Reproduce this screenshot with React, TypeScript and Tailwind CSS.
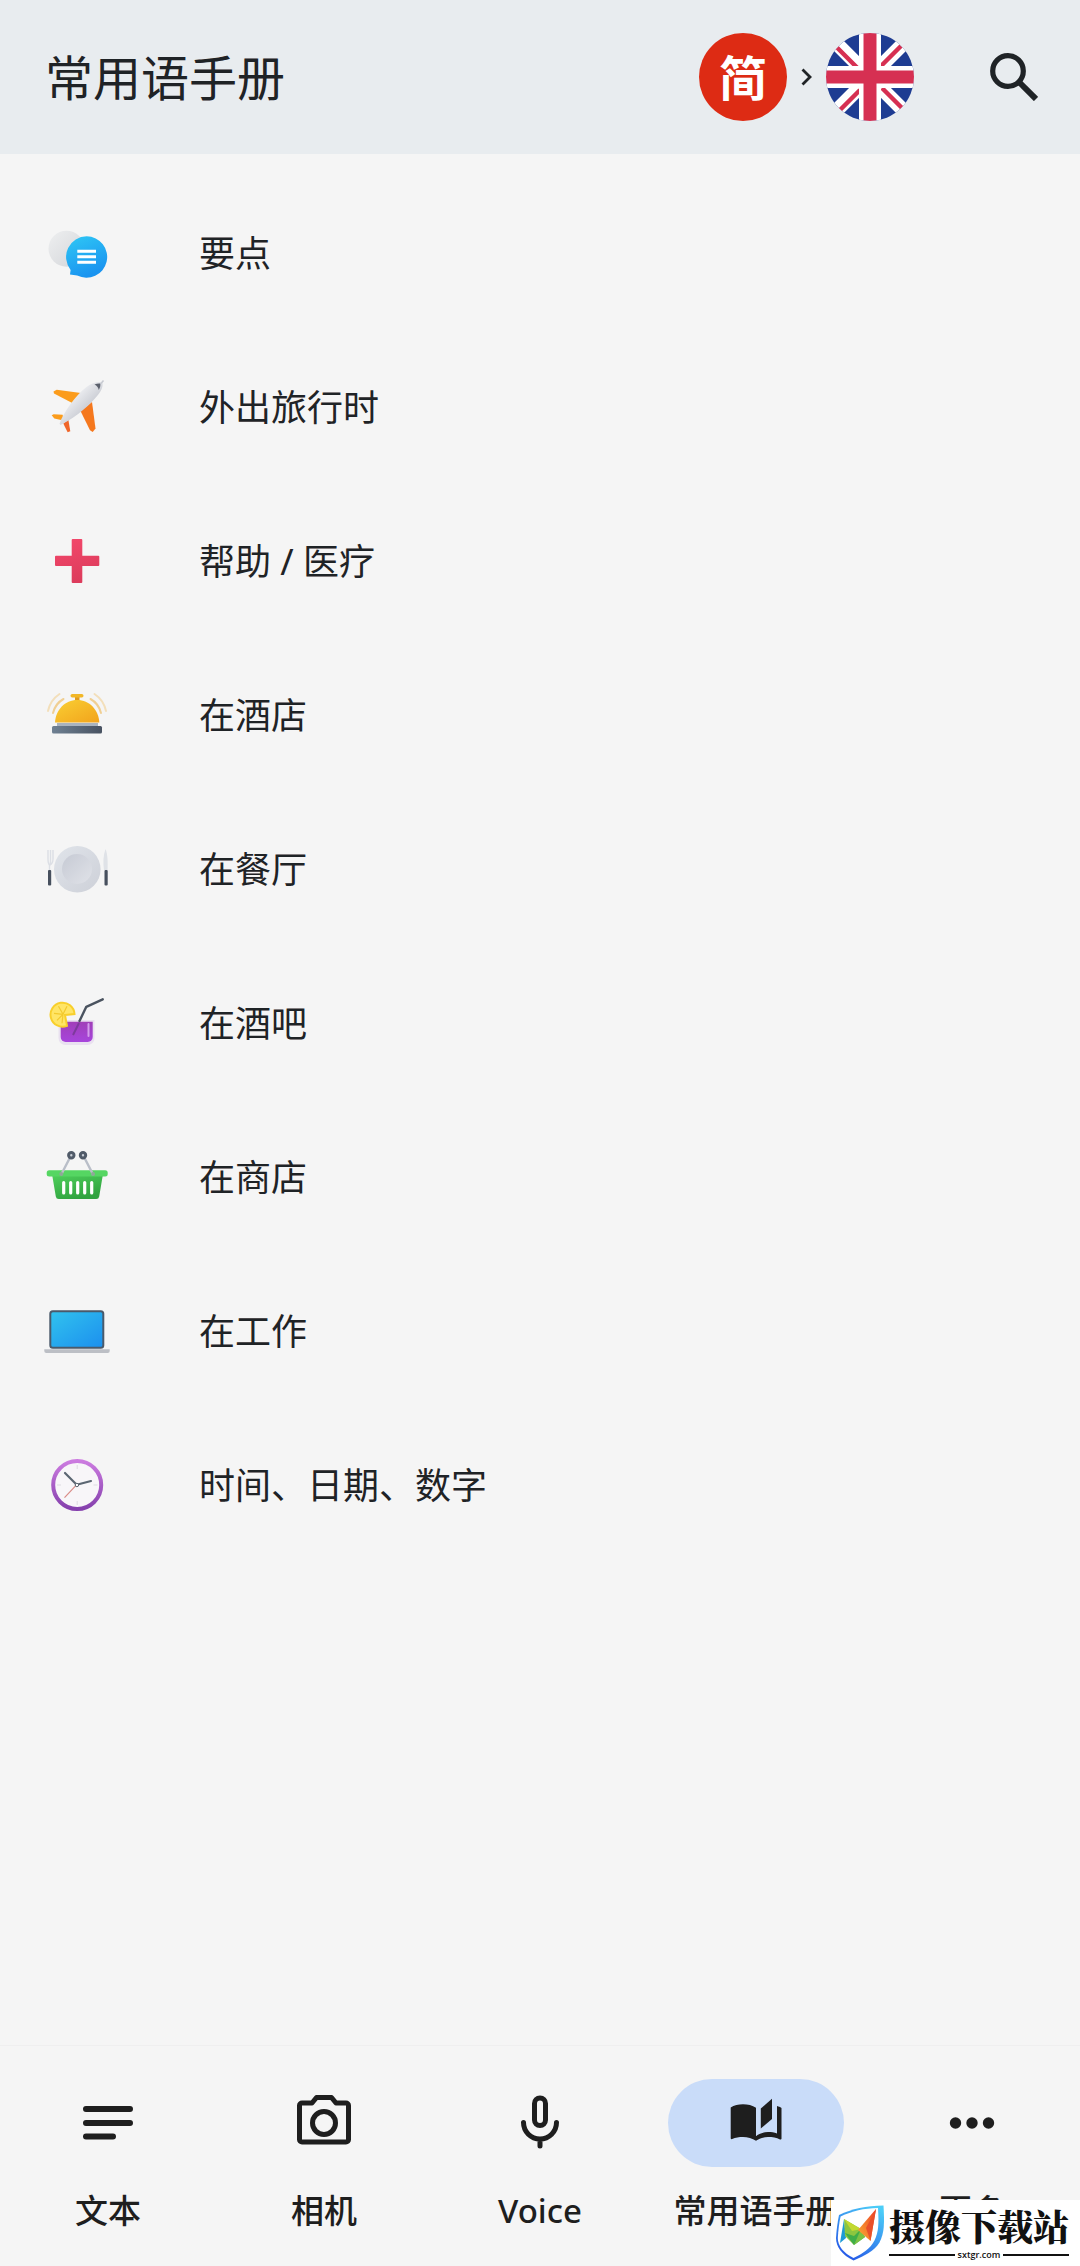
import type { ReactNode } from 'react';

interface Category {
    id: string;
    label: string;
    icon: ReactNode;
}

interface Tab {
    id: string;
    label: string;
    icon: ReactNode;
}

const EssentialsIcon = () => (
    <svg viewBox="0 0 72 72" className="size-[72px] shrink-0" aria-hidden="true">
        <defs>
            <linearGradient id="bubble" x1="0" y1="0" x2="0.4" y2="1">
                <stop offset="0" stopColor="#2fc8f5" />
                <stop offset="1" stopColor="#1a94f0" />
            </linearGradient>
            <linearGradient id="bubbleBack" x1="0" y1="0" x2="1" y2="1">
                <stop offset="0" stopColor="#eeeff0" />
                <stop offset="1" stopColor="#d3d5d9" />
            </linearGradient>
        </defs>
        <circle cx="25.5" cy="29.7" r="18" fill="url(#bubbleBack)" />
        <path d="M45.7 17.3a20.7 20.7 0 1 1-9.5 39.2L29 55.5l.6-4.6A20.7 20.7 0 0 1 45.7 17.3z" fill="url(#bubble)" />
        <path d="M36.3 32.3H55M36.3 37.8H55M36.3 43.3H55" stroke="#fff" strokeWidth="3" />
    </svg>
);

const PlaneIcon = () => (
    <svg viewBox="0 0 72 72" className="size-[72px] shrink-0" aria-hidden="true">
        <defs>
            <linearGradient id="fuselage" x1="0.3" y1="0.3" x2="0.7" y2="0.7">
                <stop offset="0" stopColor="#eff0f3" />
                <stop offset="1" stopColor="#c3c6ce" />
            </linearGradient>
        </defs>
        <path d="M12.5 18.5l3.2-1.8 26 3.6-9.5 10.2L13 20.6z" fill="#fb9c1c" />
        <path d="M51 29l3.5 26.5-2.8 3.4-2.7-1.6L39.5 38z" fill="#f5781e" />
        <path d="M10.7 42.3l2-1.1 9 .6.6 5.8-9-2.2z" fill="#fb9c1c" />
        <path d="M22.3 50.6l5-4 2 11.7-2.7 1z" fill="#f0662a" />
        <path d="M61.3 9.8c1 3.5-.8 7.7-4 11.7C51 29.5 37 43.5 19.5 52l-1-1.2C22 40 34.5 22.5 45.5 14 50.5 10.2 56.5 8.4 61.3 9.8z" fill="url(#fuselage)" />
        <path d="M53.5 11.5c2-.9 4-1.2 5.8-1 .3 2-.2 4.3-1.5 6.5-.5-2.5-1.9-4.4-4.3-5.5z" fill="#5b606c" />
        <path d="M60 10.5l2.5-3" stroke="#c7cad1" strokeWidth="1.5" />
    </svg>
);

const CrossIcon = () => (
    <svg viewBox="0 0 72 72" className="size-[72px] shrink-0" aria-hidden="true">
        <defs>
            <linearGradient id="cross" x1="0" y1="0" x2="0.3" y2="1">
                <stop offset="0" stopColor="#f4486c" />
                <stop offset="1" stopColor="#dd3c5c" />
            </linearGradient>
        </defs>
        <path d="M31.7 12h8.6a1 1 0 0 1 1 1v15.7h16a1 1 0 0 1 1 1V38a1 1 0 0 1-1 1h-16v16a1 1 0 0 1-1 1h-8.6a1 1 0 0 1-1-1V39H15a1 1 0 0 1-1-1v-8.3a1 1 0 0 1 1-1h15.7V13a1 1 0 0 1 1-1z" fill="url(#cross)" />
    </svg>
);

const BellIcon = () => (
    <svg viewBox="0 0 72 72" className="size-[72px] shrink-0" aria-hidden="true">
        <defs>
            <linearGradient id="dome" x1="0" y1="0" x2="1" y2="1">
                <stop offset="0" stopColor="#f9cf33" />
                <stop offset="1" stopColor="#f2a31c" />
            </linearGradient>
            <linearGradient id="bellBase" x1="0" y1="0" x2="1" y2="0">
                <stop offset="0" stopColor="#6f8193" />
                <stop offset="1" stopColor="#485261" />
            </linearGradient>
        </defs>
        <path d="M34 16h4.5v5H34z" fill="#e09a1c" />
        <rect x="29.5" y="13" width="13" height="3.5" rx="1.7" fill="#f2b727" />
        <path d="M14 41.5C14.5 29 24 19 36.2 19s21.6 10 22.1 22.5z" fill="url(#dome)" />
        <rect x="16" y="42" width="41" height="3.5" fill="#a9b3bf" />
        <rect x="11" y="45" width="50" height="7.5" rx="1.5" fill="url(#bellBase)" />
        <g fill="none" strokeLinecap="round">
            <path d="M12 32c1.5-6 5-11 10.5-14M60 32c-1.5-6-5-11-10.5-14" stroke="#f0cf93" strokeWidth="2" />
            <path d="M7 30c1.5-7 5.5-13 11.5-17M65 30c-1.5-7-5.5-13-11.5-17" stroke="#f3dfba" strokeWidth="2" />
        </g>
    </svg>
);

const PlateIcon = () => (
    <svg viewBox="0 0 72 72" className="size-[72px] shrink-0" aria-hidden="true">
        <defs>
            <linearGradient id="plate" x1="0" y1="0" x2="1" y2="1">
                <stop offset="0" stopColor="#e0e4ea" />
                <stop offset="1" stopColor="#cdd0d8" />
            </linearGradient>
            <linearGradient id="plateInner" x1="0" y1="0" x2="1" y2="1">
                <stop offset="0" stopColor="#c6cad4" />
                <stop offset="1" stopColor="#e0e2e8" />
            </linearGradient>
        </defs>
        <circle cx="36.3" cy="34.3" r="23.3" fill="url(#plate)" />
        <circle cx="36" cy="34" r="15" fill="url(#plateInner)" />
        <path d="M7 15v9c0 3 .5 5 1.5 6v5M12 15v9c0 3-1 5-3 6M9.5 15v14" stroke="#dcdfe5" strokeWidth="1.4" fill="none" />
        <path d="M63 35c-1-7-1-14 1.5-21 2 4 2.5 14 2 21z" fill="#dfe2e7" />
        <rect x="7" y="35" width="3.2" height="15.5" rx="1" fill="#47505e" />
        <rect x="63.5" y="35" width="3.2" height="15.5" rx="1" fill="#47505e" />
    </svg>
);

const DrinkIcon = () => (
    <svg viewBox="0 0 72 72" className="size-[72px] shrink-0" aria-hidden="true">
        <defs>
            <linearGradient id="drink" x1="0" y1="0" x2="0" y2="1">
                <stop offset="0" stopColor="#a03fb8" />
                <stop offset="1" stopColor="#a745dc" />
            </linearGradient>
        </defs>
        <path d="M17.5 31h36v18a7 7 0 0 1-7 7h-22a7 7 0 0 1-7-7z" fill="#e9e1f0" />
        <path d="M19.7 32.7h32V48a5 5 0 0 1-5 5h-22a5 5 0 0 1-5-5z" fill="url(#drink)" />
        <path d="M38 34l-6 12" stroke="#7d3a9c" strokeWidth="2" />
        <path d="M47.5 35v12" stroke="#d39cec" strokeWidth="2" strokeLinecap="round" />
        <path d="M61.7 10.3L45.3 17.8 38.5 32" stroke="#4a535f" strokeWidth="2.4" fill="none" strokeLinecap="round" strokeLinejoin="round" />
        <path d="M24 26L33.5 25A12 12 0 1 0 26 36.8z" fill="#ffe566" stroke="#f8cf2b" strokeWidth="2" />
        <path d="M22 25.3l-4.5-8M22 25.3l4-8M22 25.3l-9-1M22 25.3l-6 6M22 25.3l-1 9" stroke="#f3c92d" strokeWidth="1.2" />
    </svg>
);

const BasketIcon = () => (
    <svg viewBox="0 0 72 72" className="size-[72px] shrink-0" aria-hidden="true">
        <defs>
            <linearGradient id="basket" x1="0" y1="0" x2="0.5" y2="1">
                <stop offset="0" stopColor="#4fd05c" />
                <stop offset="1" stopColor="#30a33f" />
            </linearGradient>
        </defs>
        <path d="M11 31h51l-3.8 22.5a3 3 0 0 1-3 2.5H17.8a3 3 0 0 1-3-2.5z" fill="url(#basket)" />
        <rect x="5.7" y="27.3" width="61" height="6.2" rx="2.5" fill="#55d662" />
        <path d="M22.7 39.5V50M29.7 39.5V50M36.7 39.5V50M43.7 39.5V50M50.7 39.5V50" stroke="#fff" strokeWidth="3.2" strokeLinecap="round" />
        <path d="M20.5 31L29 14.5M51.8 31L43.3 14.5" stroke="#b9bec8" strokeWidth="2.4" strokeLinecap="round" />
        <circle cx="20.3" cy="31" r="2" fill="#8fa898" />
        <circle cx="52" cy="31" r="2" fill="#8fa898" />
        <circle cx="30.3" cy="12.2" r="2.7" fill="#c8cdd6" stroke="#515b69" strokeWidth="3" />
        <circle cx="42" cy="12.2" r="2.7" fill="#c8cdd6" stroke="#515b69" strokeWidth="3" />
    </svg>
);

const LaptopIcon = () => (
    <svg viewBox="0 0 72 72" className="size-[72px] shrink-0" aria-hidden="true">
        <defs>
            <linearGradient id="screen" x1="0" y1="0" x2="1" y2="1">
                <stop offset="0" stopColor="#31c3ee" />
                <stop offset="1" stopColor="#1c8fee" />
            </linearGradient>
        </defs>
        <rect x="9.3" y="14.3" width="53" height="36.4" rx="2.5" fill="url(#screen)" stroke="#4a5a6b" strokeWidth="2" />
        <path d="M3.3 52.3h65.4V54a2 2 0 0 1-2 2H5.3a2 2 0 0 1-2-2z" fill="#bcbfc5" />
    </svg>
);

const ClockIcon = () => (
    <svg viewBox="0 0 72 72" className="size-[72px] shrink-0" aria-hidden="true">
        <defs>
            <linearGradient id="clockRing" x1="0" y1="0" x2="0" y2="1">
                <stop offset="0" stopColor="#cc7be0" />
                <stop offset="1" stopColor="#8540ad" />
            </linearGradient>
        </defs>
        <circle cx="36.2" cy="34" r="24" fill="#f8f6f9" stroke="url(#clockRing)" strokeWidth="4" />
        <path d="M36.2 14v4M36.2 50v4M16 34h4M52.5 34h4" stroke="#dedbe2" strokeWidth="1" />
        <path d="M35.7 33.7L23.5 46.7" stroke="#d98a85" strokeWidth="1.2" />
        <path d="M35.7 33.7L24 22M35.7 33.7L50 30" stroke="#5b6672" strokeWidth="2.2" strokeLinecap="round" />
        <circle cx="35.9" cy="34" r="1.7" fill="#fff" stroke="#5b6672" strokeWidth="1" />
    </svg>
);

const UkFlag = () => (
    <svg viewBox="0 0 88 88" className="size-[88px]" aria-hidden="true">
        <defs>
            <clipPath id="flagClip">
                <circle cx="44" cy="44" r="44" />
            </clipPath>
        </defs>
        <g clipPath="url(#flagClip)">
            <rect width="88" height="88" fill="#1e3c92" />
            <path d="M2 2l84 84M86 2L2 86" stroke="#fff" strokeWidth="14" />
            <path d="M11 14.5L32 35.5M54 34L75 13M14 77L34 57M56 55L77 76" stroke="#d63052" strokeWidth="4.5" />
            <path d="M44 0v88M0 44h88" stroke="#fff" strokeWidth="22" />
            <path d="M44 0v88M0 44h88" stroke="#d63052" strokeWidth="13" />
        </g>
    </svg>
);

const TextIcon = () => (
    <svg viewBox="0 0 60 60" className="size-[60px]" fill="none" stroke="currentColor" strokeWidth="6" strokeLinecap="round" aria-hidden="true">
        <path d="M8 16h44M8 30h44M8 43.5h27" />
    </svg>
);

const CameraIcon = () => (
    <svg viewBox="0 0 60 60" className="size-[60px]" fill="none" stroke="currentColor" strokeWidth="5" strokeLinejoin="round" aria-hidden="true">
        <path d="M8 10h10l4.5-5.5h15L42 10h10a2.500 2.500 0 0 1 2.500 2.500v34A2.500 2.500 0 0 1 52 49H8a2.500 2.500 0 0 1-2.500-2.500v-34A2.500 2.500 0 0 1 8 10z" />
        <circle cx="30" cy="30" r="11.5" />
    </svg>
);

const MicIcon = () => (
    <svg viewBox="0 0 60 60" className="size-[60px]" fill="none" stroke="currentColor" strokeWidth="5" strokeLinecap="round" aria-hidden="true">
        <rect x="24.5" y="5" width="11" height="27.5" rx="5.5" />
        <path d="M13.5 29.5a16.5 16.5 0 0 0 33 0M30 46v7" />
    </svg>
);

const BookIcon = () => (
    <svg viewBox="0 0 60 60" className="size-[60px]" fill="currentColor" aria-hidden="true">
        <path d="M4.7 14.5C8 12.3 12.5 11.3 17 11.3c4.6 0 9.5 1 13 3.5v28.5c2.5-2.3 7.5-4.2 12-4.2 3.4 0 6.3.3 9 1.5V13c1.8.6 3 1 4.5 2v30.500c0 .8-.7 1.3-1.5 1-3.5-1.9-7.5-2.5-12-2.5-4.2 0-8.7 1.5-12 3.8-3.5-2.3-8.5-3.8-13-3.8-4 0-7.5.4-10.800 2-.8.4-1.5 0-1.5-.8z" />
        <path d="M46 5.7L34.8 15.5v20L46 26z" />
    </svg>
);

const MoreIcon = () => (
    <svg viewBox="0 0 60 60" className="size-[60px]" fill="currentColor" aria-hidden="true">
        <circle cx="13.5" cy="30" r="5.7" />
        <circle cx="30" cy="30" r="5.7" />
        <circle cx="46.5" cy="30" r="5.7" />
    </svg>
);

const ShieldLogo = () => (
    <svg viewBox="0 0 50 58" className="h-[58px] w-[50px] shrink-0" aria-hidden="true">
        <defs>
            <linearGradient id="shield" x1="0.8" y1="0" x2="0.2" y2="1">
                <stop offset="0" stopColor="#4ccdf8" />
                <stop offset="1" stopColor="#2353e6" />
            </linearGradient>
            <linearGradient id="shieldOrange" x1="1" y1="0" x2="0" y2="1">
                <stop offset="0" stopColor="#ee3d25" />
                <stop offset="1" stopColor="#f9b233" />
            </linearGradient>
        </defs>
        <path d="M48.5 1.5c1 17 1 27-4 37C39.5 47 29 52 18.5 56.5 7 51 1 43 1 34c.5-8 1.5-16 3-23C17 5 31 1.5 48.5 1.5z" fill="url(#shield)" />
        <path d="M43 4c1 16 .5 24-3.5 32.5C35.5 44.5 28 49.5 18.5 54 8.5 49 2.800 42 2.800 34c.5-8 1.300-15 2.800-21.500C17 7 29 4.200 43 4z" fill="#fff" />
        <path d="M9 15L5 39l6-5z" fill="#1d9ad6" />
        <path d="M9 15l17 10-7 16L10 32z" fill="#8cc63f" />
        <path d="M9 15l17 10-9 2z" fill="#c3d930" />
        <path d="M10 29l9 12 11-8-4-8-7 7z" fill="#3fae49" />
        <path d="M19 41l7-16 4 8z" fill="#7cc242" />
        <path d="M41 5L23 26l12.500 11z" fill="url(#shieldOrange)" />
        <path d="M41 5L31 24l4.500 13z" fill="#e9502a" />
    </svg>
);

const categories: Category[] = [
    { id: 'essentials', label: '要点', icon: <EssentialsIcon /> },
    { id: 'travel', label: '外出旅行时', icon: <PlaneIcon /> },
    { id: 'medical', label: '帮助 / 医疗', icon: <CrossIcon /> },
    { id: 'hotel', label: '在酒店', icon: <BellIcon /> },
    { id: 'restaurant', label: '在餐厅', icon: <PlateIcon /> },
    { id: 'bar', label: '在酒吧', icon: <DrinkIcon /> },
    { id: 'store', label: '在商店', icon: <BasketIcon /> },
    { id: 'work', label: '在工作', icon: <LaptopIcon /> },
    { id: 'time', label: '时间、日期、数字', icon: <ClockIcon /> },
];

const tabs: Tab[] = [
    { id: 'text', label: '文本', icon: <TextIcon /> },
    { id: 'camera', label: '相机', icon: <CameraIcon /> },
    { id: 'voice', label: 'Voice', icon: <MicIcon /> },
    { id: 'phrasebook', label: '常用语手册', icon: <BookIcon /> },
    { id: 'more', label: '更多', icon: <MoreIcon /> },
];

export default function App() {
    const activeTab = 'phrasebook';

    return (
        <div className="relative flex min-h-screen flex-col bg-[#f5f5f5] font-['Noto_Sans','Noto_Sans_CJK_SC',sans-serif] text-[#1f2326]">
            <header className="flex items-center bg-[#e8ecef] py-[33px] pr-[42px] pl-[45px] font-['Noto_Sans_CJK_SC',sans-serif]">
                <h1 className="flex-1 pb-1 text-[48px] leading-[56px] font-normal">常用语手册</h1>
                <div className="flex items-center gap-[14px]">
                    <button type="button" aria-label="简体中文" className="flex size-[88px] items-center justify-center rounded-full bg-[#dd2b14] pb-1 text-[48px] leading-none font-bold text-white">
                        简
                    </button>
                    <svg viewBox="0 0 11 18" className="h-[18px] w-[11px]" fill="none" stroke="currentColor" strokeWidth="2.8" aria-hidden="true">
                        <path d="M1.5 1.5L9 9l-7.5 7.5" />
                    </svg>
                    <button type="button" aria-label="English" className="rounded-full">
                        <UkFlag />
                    </button>
                </div>
                <button type="button" aria-label="搜索" className="ml-[76px]">
                    <svg viewBox="0 0 48 48" className="size-[48px]" fill="none" stroke="currentColor" aria-hidden="true">
                        <circle cx="18" cy="18" r="15.3" strokeWidth="5.2" />
                        <path d="M29.5 29.5L46 46" strokeWidth="6" />
                    </svg>
                </button>
            </header>

            {/* Phrase categories */}
            <main className="flex-1 py-6">
                <ul>
                    {categories.map(c => (
                        <li key={c.id}>
                            <button type="button" className="flex w-full items-center gap-[86px] px-[41px] py-[41px] text-left text-[36px] leading-[48px]">
                                {c.icon}
                                <span className="pb-[2px]">{c.label}</span>
                            </button>
                        </li>
                    ))}
                </ul>
            </main>

            {/* Bottom navigation */}
            <nav className="grid grid-cols-5 border-t border-[#efefef] pt-[33px] pb-[35px] text-[#1e1e1e]">
                {tabs.map(t => (
                    <button
                        key={t.id}
                        type="button"
                        aria-current={t.id === activeTab ? 'page' : undefined}
                        className="flex flex-col items-center gap-6 text-[33px] leading-[40px] font-medium whitespace-nowrap"
                    >
                        <span className={`flex h-[88px] w-[176px] items-center justify-center rounded-full ${t.id === activeTab ? 'bg-[#c9dcf9]' : ''}`}>
                            {t.icon}
                        </span>
                        <span>{t.label}</span>
                    </button>
                ))}
            </nav>

            {/* Site badge */}
            <div className="absolute right-0 bottom-0 flex items-center gap-1 bg-white py-1 pr-[11px] pl-1 text-[#111]">
                <ShieldLogo />
                <div className="flex flex-col">
                    <span className="font-['Noto_Serif_CJK_SC','Noto_Sans_CJK_SC',serif] text-[36px] leading-[44px] font-black">摄像下载站</span>
                    <span className="flex items-center gap-[3px] font-['Open_Sans',sans-serif] text-[9px] leading-[14px] font-semibold">
                        <span className="h-[2px] flex-1 bg-[#111]" />
                        sxtgr.com
                        <span className="h-[2px] flex-1 bg-[#111]" />
                    </span>
                </div>
            </div>
        </div>
    );
}
